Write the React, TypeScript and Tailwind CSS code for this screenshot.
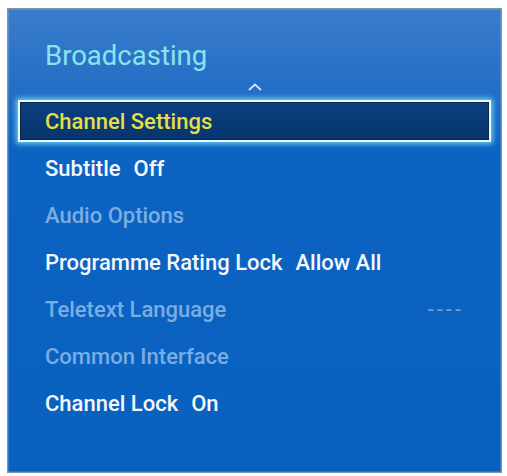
import React from "react";

type Item = { label: string; value?: string; state: "selected" | "normal" | "disabled"; right?: string };

const items: Item[] = [
    { label: "Channel Settings", state: "selected" },
    { label: "Subtitle", value: "Off", state: "normal" },
    { label: "Audio Options", state: "disabled" },
    { label: "Programme Rating Lock", value: "Allow All", state: "normal" },
    { label: "Teletext Language", state: "disabled", right: "----" },
    { label: "Common Interface", state: "disabled" },
    { label: "Channel Lock", value: "On", state: "normal" }
];

const MenuRow = ({ item }: { item: Item }) => {
    if (item.state === "selected") {
        return (
            <div className="mx-[10px] mt-[2px] mb-[3px] flex h-[42px] items-center border-[2px] border-[#e8fbff] bg-gradient-to-b from-[#0b3f80] to-[#07356e] pl-[25px] shadow-[0_0_5px_2px_rgba(120,220,255,0.85),inset_0_0_0_1px_#0a2448]">
                <span className="pt-[2px] text-[22px] leading-[36px] text-[#e4df45]">{item.label}</span>
            </div>
        );
    }
    const color = item.state === "disabled" ? "text-[#7aade2]" : "text-[#f4f8fc]";
    return (
        <div className={`mx-[10px] flex h-[47px] items-center justify-between pl-[27px] pr-[27px] text-[22px] leading-[47px] ${color}`}>
            <span>
                {item.label}
                {item.value && <span className="ml-[13px]">{item.value}</span>}
            </span>
            {item.right && <span className="tracking-[3px] text-[22px] font-normal text-[#6ea3dc]">{item.right}</span>}
        </div>
    );
};

export default function App() {
    return (
        <div className="h-[476px] w-[507px] bg-white pl-[7px] pt-[8px] font-['Roboto','Liberation_Sans',Arial,sans-serif] font-medium">
            <div className="flex h-[465px] w-[495px] flex-col border border-[#7d93ad] bg-gradient-to-b from-[#3a7dcb] via-[#0d63c2] via-30% to-[#0860bf] shadow-[inset_0_0_0_1px_rgba(255,255,255,0.15)]">
                <div className="pl-[37px] pt-[32px] text-[27.5px] font-normal leading-[30px] text-[#8ae4ee]">Broadcasting</div>
                <div className="flex h-[27px] items-start justify-center pt-[12px]">
                    <svg width="16" height="8" viewBox="0 0 16 8">
                        <path d="M2 7 L8 1.5 L14 7" fill="none" stroke="#cfe6fa" strokeWidth="1.8" />
                    </svg>
                </div>
                <div className="flex flex-col">
                    {items.map(item => (
                        <MenuRow key={item.label} item={item} />
                    ))}
                </div>
            </div>
        </div>
    );
}
